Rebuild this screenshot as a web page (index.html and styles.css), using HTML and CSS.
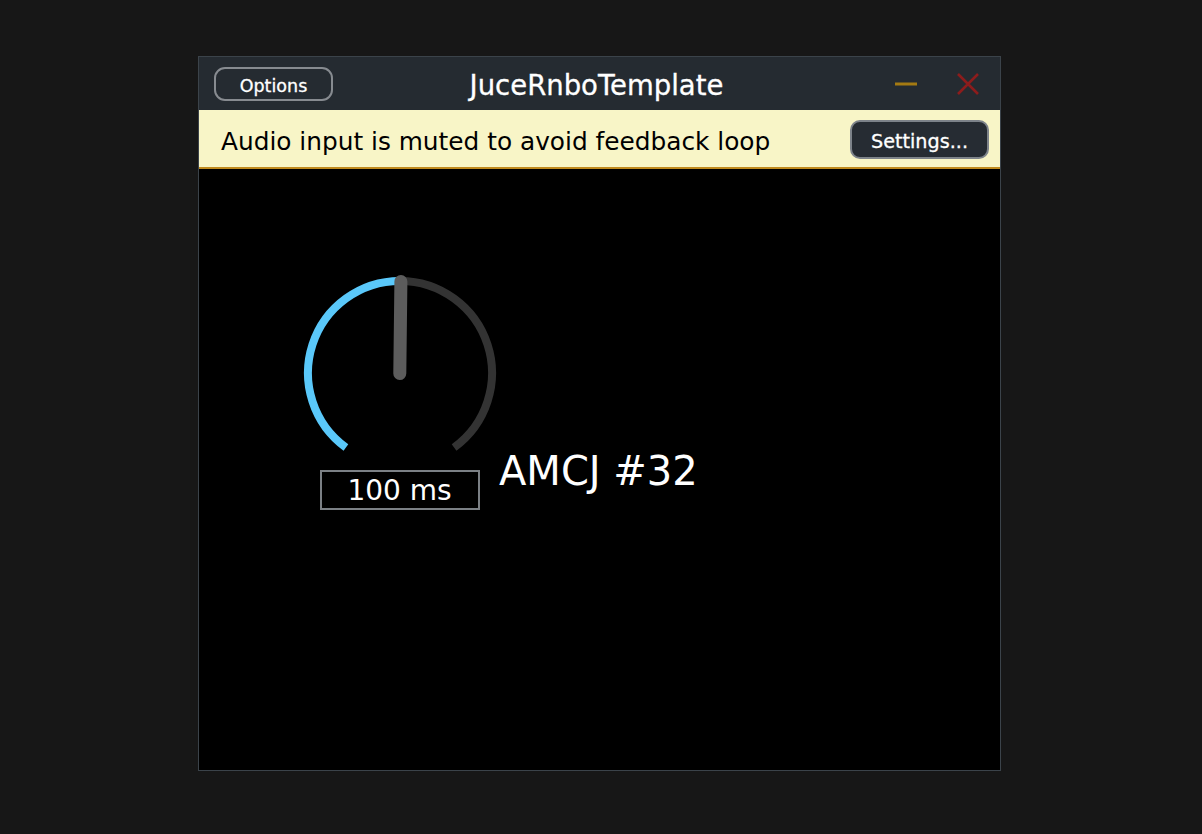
FILE: index.html
```html
<!DOCTYPE html>
<html lang="en">
<head>
<meta charset="utf-8">
<title>JuceRnboTemplate</title>
<link rel="stylesheet" href="styles.css">
</head>
<body>
<div class="window">
  <header class="titlebar">
    <div class="tb-left"><button class="btn options">Options</button></div>
    <div class="title">JuceRnboTemplate</div>
    <div class="tb-right">
      <span class="win-btn minimize" aria-label="Minimise">
        <svg width="24" height="24" viewBox="0 0 24 24"><line x1="1" y1="12" x2="23" y2="12" stroke="#a47a12" stroke-width="3"/></svg>
      </span>
      <span class="win-btn close" aria-label="Close">
        <svg width="22" height="22" viewBox="0 0 22 22"><path d="M1 1 L21 21 M21 1 L1 21" stroke="#8c1c1c" stroke-width="2.6" fill="none"/></svg>
      </span>
    </div>
  </header>
  <div class="banner">
    <span class="banner-text">Audio input is muted to avoid feedback loop</span>
    <button class="btn settings">Settings...</button>
  </div>
  <main class="content">
    <div class="knob-row">
      <div class="knob-col">
        <svg class="knob" width="200" height="197" viewBox="0 0 200 197">
          <path d="M45.92 174.43 A92 92 0 0 1 100 8" stroke="#5ac8fa" stroke-width="8" fill="none"/>
          <path d="M100 8 A92 92 0 0 1 154.08 174.43" stroke="#333333" stroke-width="8" fill="none"/>
          <line x1="100.9" y1="8.5" x2="99.8" y2="100.5" stroke="#5c5c5c" stroke-width="13" stroke-linecap="round"/>
        </svg>
        <div class="value-box">100 ms</div>
      </div>
      <div class="param-label">AMCJ #32</div>
    </div>
  </main>
</div>
</body>
</html>
```
FILE: styles.css
```css
* { box-sizing: border-box; }
html, body { margin: 0; padding: 0; }
body {
  background: #171717;
  width: 1202px;
  height: 834px;
  padding: 56px 0 0 198px;
  font-family: "DejaVu Sans", "Liberation Sans", sans-serif;
  overflow: hidden;
}
.window {
  width: 803px;
  height: 715px;
  border: 1px solid #3b434a;
  background: #000;
  display: flex;
  flex-direction: column;
}
.titlebar {
  height: 53px;
  background: #252b31;
  display: grid;
  grid-template-columns: 1fr auto 1fr;
  align-items: center;
  padding: 0 21px 0 15px;
}
.tb-left { display: flex; align-items: center; }
.btn {
  font-family: "DejaVu Sans", "Liberation Sans", sans-serif;
  color: #fff;
  background: #252b31;
  cursor: pointer;
  -webkit-text-stroke: 0.3px #fff;
}
.options {
  width: 119px;
  height: 34px;
  border: 2px solid #878b90;
  border-radius: 11px;
  font-size: 17.5px;
  padding: 3px 0 0;
  margin-top: 1px;
}
.title {
  color: #fff;
  font-size: 27.5px;
  line-height: 1;
  padding-top: 4px;
  -webkit-text-stroke: 0.3px #fff;
}
.tb-right {
  display: flex;
  justify-content: flex-end;
  align-items: center;
  gap: 39px;
}
.win-btn { display: flex; align-items: center; }
.minimize svg { display: block; }
.close svg { display: block; margin-top: 1px; }
.banner {
  height: 59px;
  background: #f8f5c7;
  border-bottom: 2px solid #c08a1e;
  display: flex;
  align-items: center;
  justify-content: space-between;
  padding: 0 11px 0 22px;
}
.banner-text {
  color: #000;
  font-size: 24.8px;
  line-height: 1;
  padding-top: 7px;
}
.settings {
  width: 139px;
  height: 39px;
  border: 2px solid #7d838a;
  border-radius: 10px;
  background: #262c33;
  font-size: 19.2px;
  padding: 3px 0 0;
  margin-top: 2px;
}
.content {
  flex: 1;
  padding: 104px 0 0 101px;
}
.knob-row {
  display: flex;
  align-items: flex-end;
}
.knob-col {
  width: 200px;
  display: flex;
  flex-direction: column;
  align-items: center;
}
.knob { display: block; }
.value-box {
  width: 160px;
  height: 40px;
  border: 2px solid #7b8085;
  color: #fff;
  font-size: 28px;
  line-height: 38px;
  text-align: center;
  margin-left: -1px;
}
.param-label {
  color: #fff;
  font-size: 40px;
  line-height: 1;
  margin-left: -1px;
  padding-bottom: 19px;
}
```
